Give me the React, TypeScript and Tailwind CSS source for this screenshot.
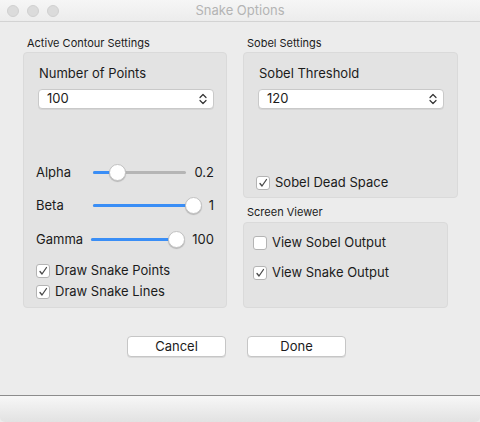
import React from "react";

const font = { fontFamily: "Inter, 'Liberation Sans', sans-serif" };

function Chevrons() {
  return (
    <svg width="8" height="12" viewBox="0 0 8 12" fill="none" stroke="#333" strokeWidth="1.2" strokeLinecap="round" strokeLinejoin="round">
      <path d="M1 4.5 L4 1.5 L7 4.5" />
      <path d="M1 7.5 L4 10.5 L7 7.5" />
    </svg>
  );
}

function Select({ value, width }: { value: string; width: string }) {
  return (
    <div className={`${width} h-[20px] mt-[8px] bg-white border border-[#c9c9c9] rounded-[4px] shadow-[0_1px_0_rgba(0,0,0,0.06)] flex items-center pl-[8px] pr-[6px] text-[13px] text-[#1b1b1b]`}>
      <span className="flex-1">{value}</span>
      <Chevrons />
    </div>
  );
}

function Check({ checked, label }: { checked: boolean; label: string }) {
  return (
    <div className="flex items-center h-[20px] gap-[5px] text-[13px] text-[#1b1b1b]">
      <div className="w-[14px] h-[14px] bg-white border border-[#b4b4b4] rounded-[3px] flex items-center justify-center">
        {checked && (
          <svg width="10" height="10" viewBox="0 0 10 10" fill="none" stroke="#4a4a4a" strokeWidth="1.3" strokeLinecap="round" strokeLinejoin="round">
            <path d="M2 5.5 L4 8 L8.5 1.5" />
          </svg>
        )}
      </div>
      <span>{label}</span>
    </div>
  );
}

function Slider({ width, track, knob }: { width: number; track: number; knob: number }) {
  return (
    <div className="relative h-[20px]" style={{ width }}>
      <div className="absolute top-[8px] left-0 h-[3px] rounded-full bg-[#b5b5b5]" style={{ width: track }} />
      <div className="absolute top-[8px] left-0 h-[3px] rounded-full bg-[#3a8ef6]" style={{ width: knob }} />
      <div
        className="absolute top-[1px] w-[17px] h-[17px] rounded-full bg-white border border-[#c2c2c2] shadow-[0_1px_1px_rgba(0,0,0,0.2)]"
        style={{ left: knob - 8.5 }}
      />
    </div>
  );
}

function SliderRow({ label, labelW, value, width, track, knob, mt }: { label: string; labelW: string; value: string; width: number; track: number; knob: number; mt: string }) {
  return (
    <div className={`flex items-center h-[20px] pl-[12px] pr-[12px] ${mt} text-[13px] text-[#1b1b1b]`}>
      <span className={labelW}>{label}</span>
      <Slider width={width} track={track} knob={knob} />
      <span className="ml-auto">{value}</span>
    </div>
  );
}

export default function App() {
  return (
    <div className="w-[480px] h-[422px] bg-white flex flex-col overflow-hidden" style={font}>
      {/* title bar */}
      <div className="h-[22px] border-b border-[#d3d3d3] bg-gradient-to-b from-[#f6f6f6] to-[#ececec] grid grid-cols-[1fr_auto_1fr] items-center">
        <div className="flex gap-[8px] pl-[7px]">
          <div className="w-[12px] h-[12px] rounded-full bg-[#dbdbdb] border border-[#d0d0d0]" />
          <div className="w-[12px] h-[12px] rounded-full bg-[#dbdbdb] border border-[#d0d0d0]" />
          <div className="w-[12px] h-[12px] rounded-full bg-[#dbdbdb] border border-[#d0d0d0]" />
        </div>
        <div className="text-[13px] text-[#b4b4b4]">Snake Options</div>
        <div />
      </div>

      <div className="flex-1 bg-[#ececec] flex flex-col">
        <div className="flex pl-[23px] gap-[16px]">
          {/* left column */}
          <div className="pt-[14px]">
            <div className="h-[14px] leading-[14px] text-[11px] text-[#1b1b1b] pl-[4px]">Active Contour Settings</div>
            <div className="mt-[2px] w-[204px] h-[256px] bg-[#e3e3e3] border border-[#dadada] rounded-[4px]">
              <div className="pl-[14px] pt-[12px]">
                <div className="h-[16px] leading-[16px] text-[13px] text-[#1b1b1b] pl-[1px]">Number of Points</div>
                <Select value="100" width="w-[176px]" />
              </div>
              <SliderRow label="Alpha" labelW="w-[57px]" value="0.2" width={93} track={93} knob={24} mt="mt-[54px]" />
              <SliderRow label="Beta" labelW="w-[57px]" value="1" width={108} track={100} knob={100} mt="mt-[13px]" />
              <SliderRow label="Gamma" labelW="w-[55px]" value="100" width={93} track={93} knob={85} mt="mt-[14px]" />
              <div className="pl-[12px] mt-[11px]">
                <Check checked label="Draw Snake Points" />
                <div className="mt-[1px]">
                  <Check checked label="Draw Snake Lines" />
                </div>
              </div>
            </div>
          </div>

          {/* right column */}
          <div className="pt-[14px]">
            <div className="h-[14px] leading-[14px] text-[11px] text-[#1b1b1b] pl-[4px]">Sobel Settings</div>
            <div className="mt-[2px] w-[215px] h-[146px] bg-[#e3e3e3] border border-[#dadada] rounded-[4px]">
              <div className="pl-[14px] pt-[12px]">
                <div className="h-[16px] leading-[16px] text-[13px] text-[#1b1b1b] pl-[1px]">Sobel Threshold</div>
                <Select value="120" width="w-[186px]" />
              </div>
              <div className="pl-[12px] mt-[64px]">
                <Check checked label="Sobel Dead Space" />
              </div>
            </div>
            <div className="mt-[7px] h-[14px] leading-[14px] text-[11px] text-[#1b1b1b] pl-[4px]">Screen Viewer</div>
            <div className="mt-[3px] w-[205px] h-[86px] bg-[#e3e3e3] border border-[#dadada] rounded-[4px] pl-[9px] pt-[10px]">
              <Check checked={false} label="View Sobel Output" />
              <div className="mt-[10px]">
                <Check checked label="View Snake Output" />
              </div>
            </div>
          </div>
        </div>

        {/* buttons */}
        <div className="flex pl-[127px] gap-[21px] mt-[28px]">
          <button className="w-[99px] h-[21px] bg-white border border-[#c6c6c6] rounded-[4px] shadow-[0_1px_0_rgba(0,0,0,0.08)] text-[13px] text-[#1b1b1b]">Cancel</button>
          <button className="w-[99px] h-[21px] bg-white border border-[#c6c6c6] rounded-[4px] shadow-[0_1px_0_rgba(0,0,0,0.08)] text-[13px] text-[#1b1b1b]">Done</button>
        </div>

        {/* footer */}
        <div className="mt-auto h-[27px] border-t border-[#8c8c8c] bg-gradient-to-b from-[#f7f7f7] to-[#e2e2e2] rounded-b-[5px]" />
      </div>
    </div>
  );
}
